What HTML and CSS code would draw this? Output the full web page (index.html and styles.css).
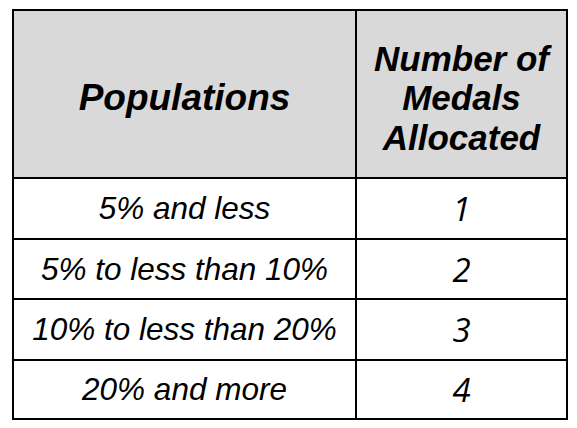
FILE: index.html
```html
<!DOCTYPE html>
<html>
<head>
<meta charset="utf-8">
<link rel="stylesheet" href="styles.css">
</head>
<body>
<div class="medals">
  <div class="cell head head-pop">Populations</div>
  <div class="cell head head-num">Number of<br>Medals<br>Allocated</div>
  <div class="cell pop r1">5% and less</div>
  <div class="cell num r1">1</div>
  <div class="cell pop r2">5% to less than 10%</div>
  <div class="cell num r2">2</div>
  <div class="cell pop r3">10% to less than 20%</div>
  <div class="cell num r3">3</div>
  <div class="cell pop r4">20% and more</div>
  <div class="cell num r4">4</div>
</div>
</body>
</html>
```
FILE: styles.css
```css
html, body {
  margin: 0;
  padding: 0;
  background: #ffffff;
}
body {
  padding: 9px 0 0 12px;
}
.medals {
  display: grid;
  grid-template-columns: 343px 211px;
  grid-template-rows: 168px 61px 60px 61px 59px;
  width: 556px;
  box-sizing: border-box;
  border-left: 2px solid #000;
  border-top: 2px solid #000;
}
.cell {
  box-sizing: border-box;
  border-right: 2px solid #000;
  border-bottom: 2px solid #000;
  display: flex;
  align-items: center;
  justify-content: center;
  text-align: center;
  color: #000;
  font-style: italic;
}
.head {
  background: #d9d9d9;
  font-family: "Liberation Sans", Arial, sans-serif;
  font-weight: bold;
}
.head-pop {
  font-size: 37px;
  padding-top: 8px;
}
.head-num {
  font-size: 35px;
  line-height: 39.5px;
  padding-top: 8px;
}
.pop {
  font-family: "Liberation Sans", Arial, sans-serif;
  font-size: 31.5px;
}
.num {
  font-family: "Open Sans", sans-serif;
  font-size: 33px;
}
```
